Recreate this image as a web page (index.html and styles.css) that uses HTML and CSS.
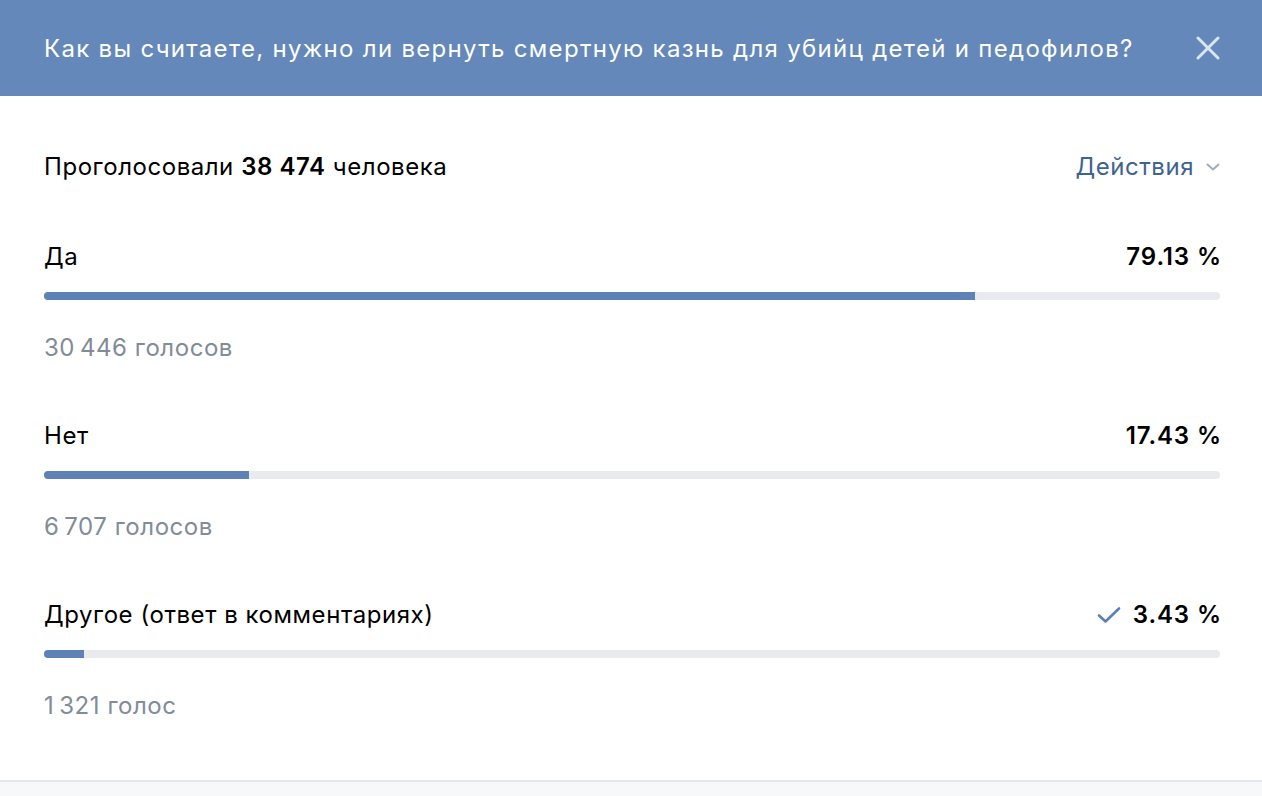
FILE: index.html
```html
<!DOCTYPE html>
<html lang="ru">
<head>
    <meta charset="UTF-8">
    <meta name="viewport" content="width=device-width, initial-scale=1.0">
    <title>Опрос</title>
    <link rel="stylesheet" href="styles.css">
</head>
<body>
    <div class="modal">
        <!-- Header -->
        <div class="modal-header">
            <h1 class="modal-title">Как вы считаете, нужно ли вернуть смертную казнь для убийц детей и педофилов?</h1>
            <button class="close-btn" aria-label="Закрыть">
                <svg width="24" height="24" viewBox="0 0 24 24">
                    <path d="M2 2 L22 22 M22 2 L2 22" stroke="currentColor" stroke-width="3" stroke-linecap="round" fill="none"/>
                </svg>
            </button>
        </div>

        <!-- Body -->
        <div class="modal-body">
            <div class="summary">
                <span>Проголосовали <b>38 474</b> человека</span>
                <a href="#" class="actions">Действия
                    <svg class="chevron" width="14" height="8" viewBox="0 0 14 8">
                        <path d="M1.5 1.5 L7 6.5 L12.5 1.5" stroke="currentColor" stroke-width="2" stroke-linecap="round" stroke-linejoin="round" fill="none"/>
                    </svg>
                </a>
            </div>

            <div class="option">
                <div class="option-head">
                    <span class="option-label">Да</span>
                    <span class="option-percent">79.13 %</span>
                </div>
                <div class="bar"><div class="bar-fill" style="width: 79.13%"></div></div>
                <div class="option-count">30&#8201;446 голосов</div>
            </div>

            <div class="option">
                <div class="option-head">
                    <span class="option-label">Нет</span>
                    <span class="option-percent">17.43 %</span>
                </div>
                <div class="bar"><div class="bar-fill" style="width: 17.43%"></div></div>
                <div class="option-count">6&#8201;707 голосов</div>
            </div>

            <div class="option">
                <div class="option-head">
                    <span class="option-label">Другое (ответ в комментариях)</span>
                    <span class="option-percent">
                        <svg class="check" width="24" height="18" viewBox="0 0 24 18">
                            <path d="M2 9.5 L8.5 15.5 L22 2.5" stroke="currentColor" stroke-width="2.6" stroke-linecap="round" stroke-linejoin="round" fill="none"/>
                        </svg>
                        3.43 %
                    </span>
                </div>
                <div class="bar"><div class="bar-fill" style="width: 3.43%"></div></div>
                <div class="option-count">1&#8201;321 голос</div>
            </div>
        </div>

        <div class="modal-footer"></div>
    </div>
</body>
</html>
```

FILE: styles.css
```css
body {
    margin: 0;
    padding: 0;
    background: #ffffff;
    font-family: Inter, "Liberation Sans", Arial, sans-serif;
    color: #000000;
}

.modal {
    width: 100%;
    min-height: 796px;
    display: flex;
    flex-direction: column;
}

.modal-header {
    height: 96px;
    background: #6388b9;
    display: flex;
    align-items: center;
    justify-content: space-between;
    padding: 0 42px 0 44px;
    box-sizing: border-box;
}

.modal-title {
    margin: 0;
    font-size: 24px;
    font-weight: normal;
    letter-spacing: 1.3px;
    color: #ffffff;
    white-space: nowrap;
}

.close-btn {
    background: none;
    border: none;
    padding: 0;
    width: 24px;
    height: 24px;
    color: #dce4ef;
    cursor: pointer;
    display: flex;
}

.modal-body {
    padding: 56px 42px 59px 44px;
}

.summary {
    display: flex;
    justify-content: space-between;
    align-items: center;
    font-size: 24px;
    line-height: 30px;
    letter-spacing: 0.55px;
    margin-bottom: 60px;
}

.summary b {
    font-weight: 600;
}

.actions {
    color: #3f6390;
    text-decoration: none;
    display: flex;
    align-items: center;
    gap: 12px;
}

.chevron {
    color: #a3adba;
}

.option {
    margin-bottom: 58px;
}

.option:last-child {
    margin-bottom: 0;
}

.option-head {
    display: flex;
    justify-content: space-between;
    align-items: center;
    font-size: 24px;
    line-height: 30px;
    letter-spacing: 0.55px;
}

.option-percent {
    font-weight: 600;
    letter-spacing: 0.9px;
    display: flex;
    align-items: center;
    gap: 12px;
    margin-right: -2px;
}

.check {
    color: #5b80b2;
}

.bar {
    margin-top: 20px;
    height: 8px;
    border-radius: 4px;
    background: #e8eaee;
    overflow: hidden;
}

.bar-fill {
    height: 100%;
    background: #5e82b5;
}

.option-count {
    margin-top: 33px;
    font-size: 24px;
    line-height: 30px;
    letter-spacing: 0.55px;
    color: #818c99;
}

.modal-footer {
    flex: 1;
    border-top: 2px solid #e3e6ea;
    background: #f7f8fa;
}
```
